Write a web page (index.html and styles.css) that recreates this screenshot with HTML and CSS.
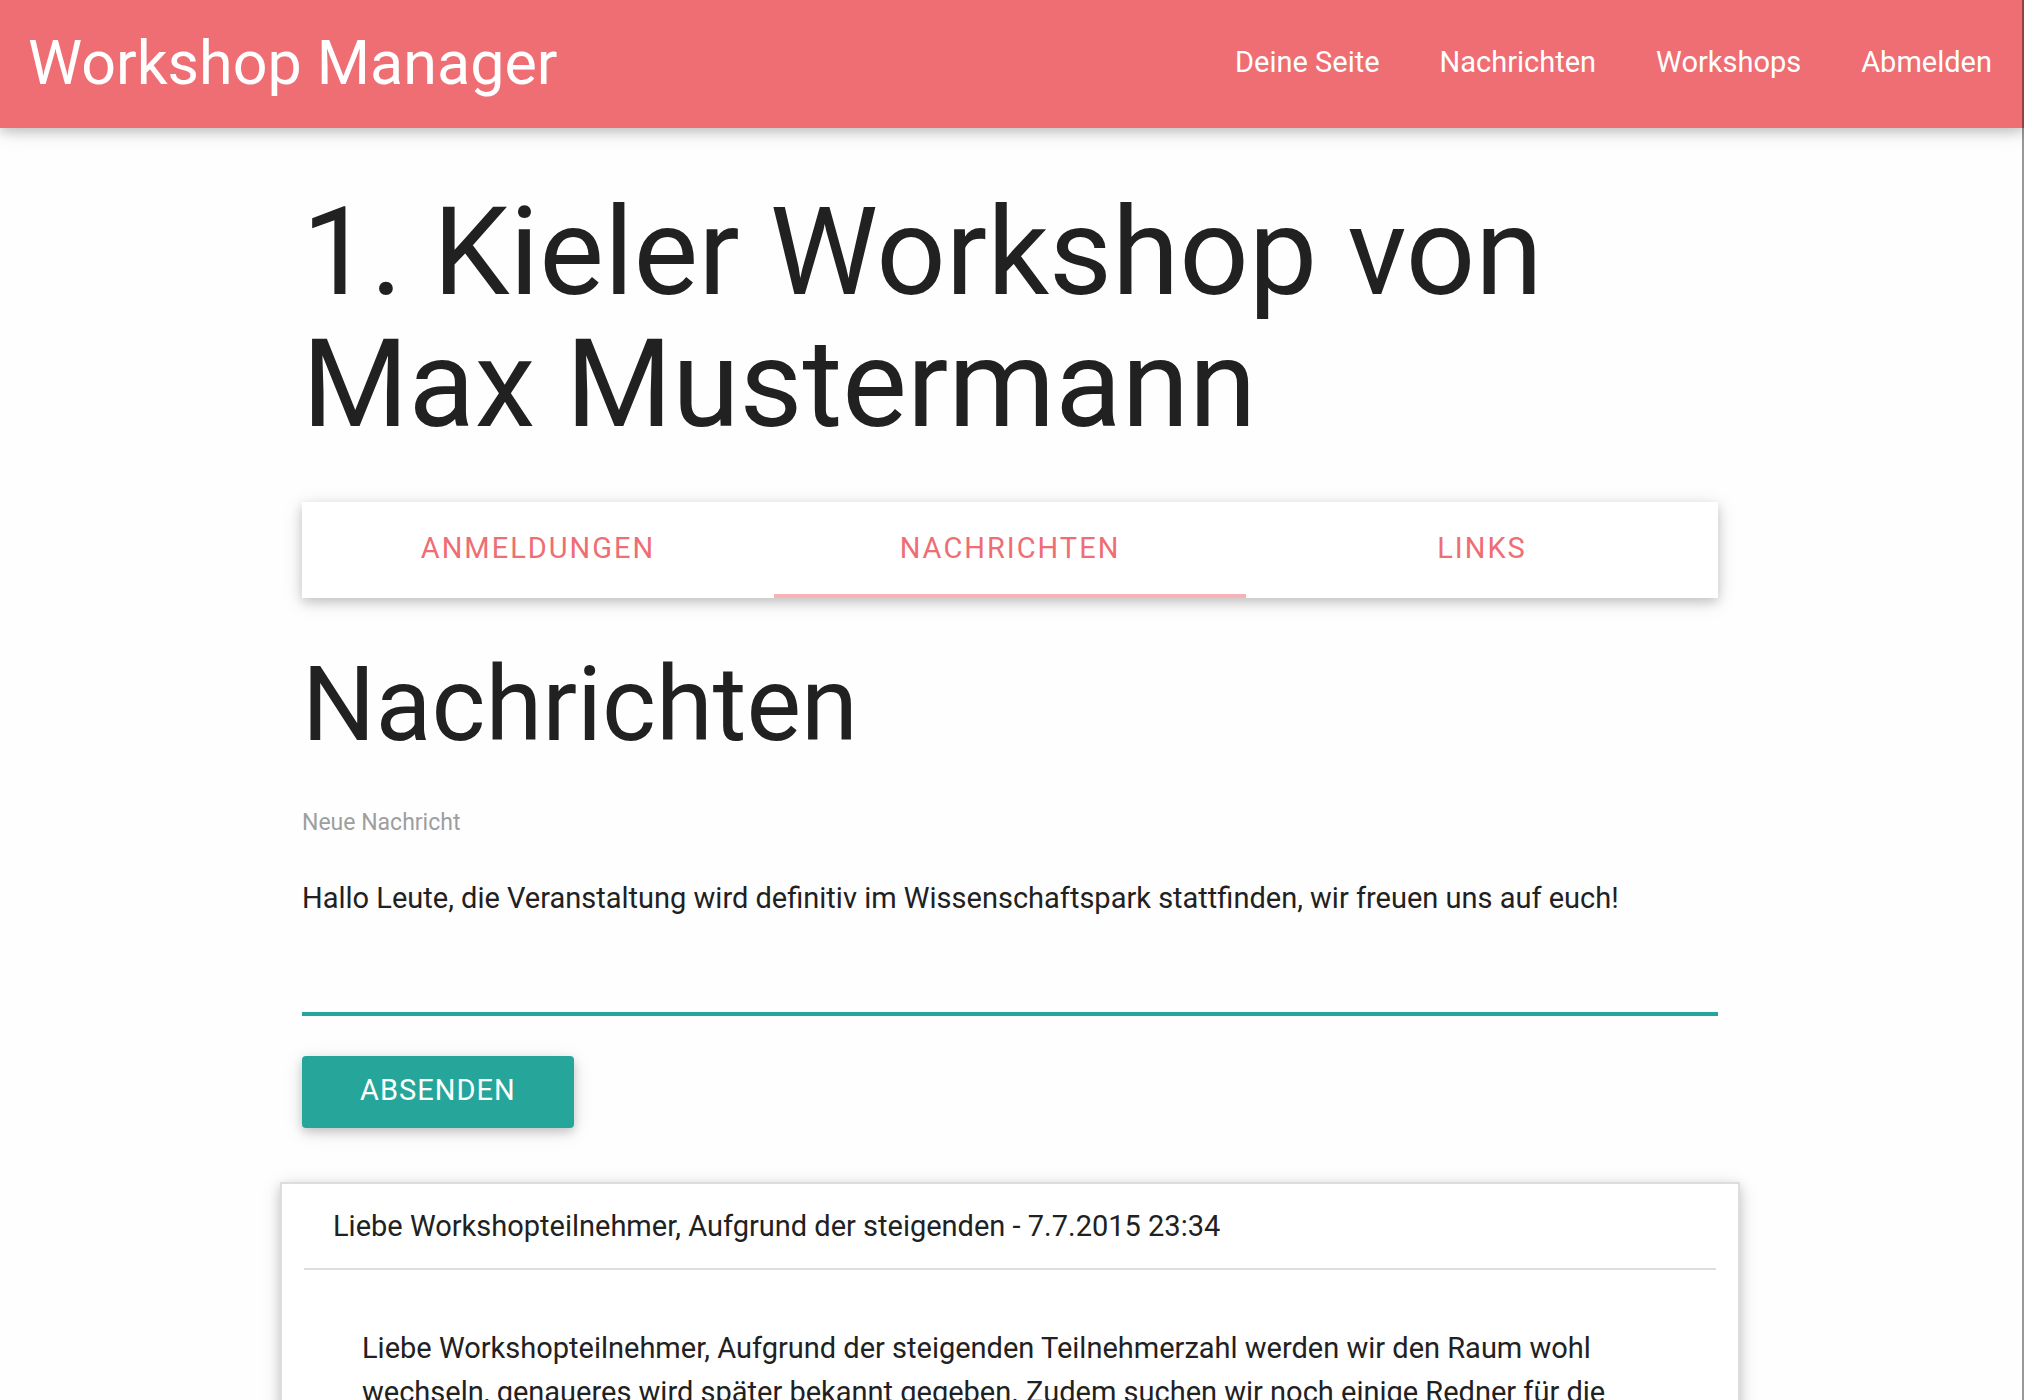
FILE: index.html
```html
<!DOCTYPE html>
<html lang="de">
<head>
  <meta charset="utf-8">
  <meta name="viewport" content="width=device-width, initial-scale=1">
  <title>Workshop Manager</title>
  <link rel="stylesheet" href="styles.css">
</head>
<body>
  <header class="navbar">
    <a class="brand" href="#">Workshop Manager</a>
    <nav class="nav-links">
      <a href="#">Deine Seite</a>
      <a href="#">Nachrichten</a>
      <a href="#">Workshops</a>
      <a href="#">Abmelden</a>
    </nav>
  </header>
  <div class="page">
    <main class="container">
      <h1 class="title">1. Kieler Workshop von Max Mustermann</h1>
      <nav class="tabs">
        <a class="tab" href="#">Anmeldungen</a>
        <a class="tab tab-active" href="#">Nachrichten</a>
        <a class="tab" href="#">Links</a>
      </nav>
      <h2 class="subtitle">Nachrichten</h2>
      <form class="message-form">
        <label class="label" for="message">Neue Nachricht</label>
        <textarea class="textarea" id="message">Hallo Leute, die Veranstaltung wird definitiv im Wissenschaftspark stattfinden, wir freuen uns auf euch!</textarea>
        <button class="button" type="button">Absenden</button>
      </form>
      <article class="card">
        <h3 class="card-header">Liebe Workshopteilnehmer, Aufgrund der steigenden - 7.7.2015 23:34</h3>
        <p class="card-body">Liebe Workshopteilnehmer, Aufgrund der steigenden Teilnehmerzahl werden wir den Raum wohl wechseln, genaueres wird später bekannt gegeben. Zudem suchen wir noch einige Redner für die</p>
      </article>
    </main>
  </div>
</body>
</html>
```
FILE: styles.css
```css
* {
  box-sizing: border-box;
}

body {
  margin: 0;
  height: 100vh;
  overflow: hidden;
  background: #fefefe;
  color: #212121;
  font: 400 29px/44px Roboto, sans-serif;
}

/* thin edge along the scroll area */
body::after {
  content: "";
  position: fixed;
  top: 0;
  right: 0;
  bottom: 0;
  width: 2px;
  background: rgba(0, 0, 0, 0.4);
}

a {
  color: inherit;
  text-decoration: none;
}

h1,
h2,
h3,
p {
  margin: 0;
  font-weight: 400;
}

.navbar {
  display: flex;
  align-items: center;
  justify-content: space-between;
  height: 128px;
  padding: 0 32px 4px 28px;
  background: #ee6e73;
  color: #fff;
  box-shadow: 0 4px 10px rgba(0, 0, 0, 0.16), 0 4px 20px rgba(0, 0, 0, 0.12);
}

.brand {
  padding-top: 2px;
  font-size: 61px;
  line-height: 120px;
}

.nav-links {
  display: flex;
  gap: 60px;
}

.page {
  padding-right: 4px;
}

.container {
  width: calc(70% + 2px);
  margin: 0 auto;
  padding-top: 59px;
}

.title {
  font-size: 122px;
  line-height: 132px;
}

.tabs {
  display: grid;
  grid-template-columns: repeat(3, 1fr);
  height: 96px;
  margin: 51px 0;
  background: #fff;
  color: #ee6e73;
  box-shadow: 0 4px 10px rgba(0, 0, 0, 0.16), 0 4px 20px rgba(0, 0, 0, 0.12);
}

.tab {
  line-height: 92px;
  text-align: center;
  text-transform: uppercase;
  letter-spacing: 2px;
}

.tab-active {
  border-bottom: 4px solid #f6b2b5;
}

.subtitle {
  font-size: 103px;
  line-height: 112px;
}

.message-form {
  display: flex;
  flex-direction: column;
  align-items: flex-start;
  padding-top: 44px;
}

.label {
  color: #9e9e9e;
  font-size: 23px;
  line-height: 36px;
}

.textarea {
  display: block;
  width: 100%;
  height: 175px;
  margin: 0 0 40px;
  padding: 35px 0 0;
  border: 0;
  border-bottom: 4px solid #26a69a;
  outline: 0;
  resize: none;
  overflow: hidden;
  background: transparent;
  color: inherit;
  font: inherit;
}

.button {
  height: 72px;
  padding: 0 58px 4px;
  border: 0;
  border-radius: 4px;
  background: #26a69a;
  color: #fff;
  font: inherit;
  letter-spacing: 1px;
  text-transform: uppercase;
  box-shadow: 0 4px 10px rgba(0, 0, 0, 0.16), 0 4px 20px rgba(0, 0, 0, 0.12);
}

.card {
  margin: 54px -22px 0;
  padding: 0 22px 58px;
  border: 2px solid #ddd;
  background: #fff;
  box-shadow: 0 4px 10px rgba(0, 0, 0, 0.16), 0 4px 20px rgba(0, 0, 0, 0.12);
}

.card-header {
  padding: 20px 29px;
  border-bottom: 2px solid #ddd;
  font-size: 29px;
  line-height: 44px;
}

.card-body {
  padding: 56px 58px;
}
```
